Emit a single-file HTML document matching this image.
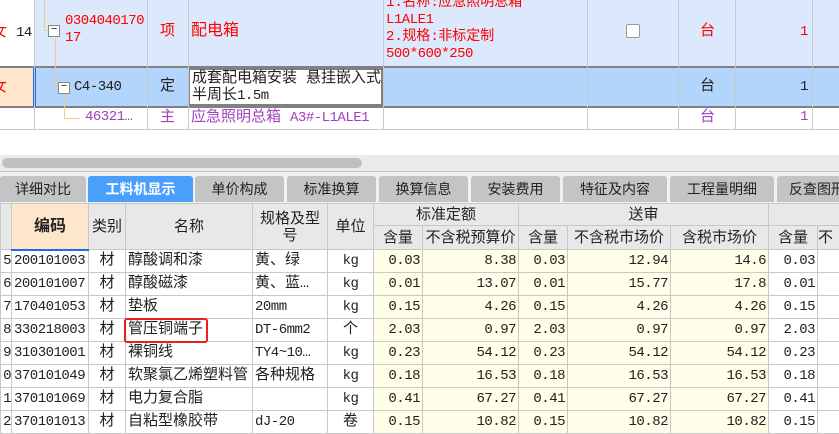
<!DOCTYPE html>
<html><head><meta charset="utf-8"><style>
*{margin:0;padding:0;box-sizing:border-box}
body{width:839px;height:432px;overflow:hidden;background:#fff;position:relative;font-family:"Liberation Mono","Noto Sans CJK SC",monospace;font-size:15px;color:#222}
.m{font-family:"Liberation Mono",monospace;font-size:14px;letter-spacing:-0.5px}
.a{position:absolute}
.v{position:absolute;width:1px;background:#c8c8c8}
.h{position:absolute;height:1px;background:#c8c8c8}
.t{position:absolute;white-space:nowrap;line-height:17px}
table{position:absolute;left:0;top:203px;border-collapse:collapse;table-layout:fixed;width:839px}
td{border:1px solid #c8c8c8;height:23px;white-space:nowrap;overflow:hidden;padding:0 2px;font-size:15px;line-height:20px}
td.n{font-family:"Liberation Mono",monospace;font-size:14px;letter-spacing:-0.5px}
th{border:1px solid #c8c8c8;background:#e8e8e8;font-weight:normal;font-family:"Liberation Sans","Noto Sans CJK SC",sans-serif;font-size:15px;line-height:17px;overflow:hidden;white-space:nowrap}
.c{text-align:center}.r{text-align:right}.y{background:#fffee8}
.tab{position:absolute;top:176px;height:26px;background:#c4c4c4;border-radius:3px 3px 0 0;text-align:center;line-height:26px;font-family:"Liberation Sans","Noto Sans CJK SC",sans-serif;font-size:14px;color:#222}
</style></head><body>
<div class="a" style="left:0;top:0;width:839px;height:68px;background:#dce9fc"></div>
<div class="a" style="left:0;top:0;width:34px;height:68px;background:#fff"></div>
<div class="a" style="left:0;top:66px;width:839px;height:42px;background:#b3d4fb;border-top:2px solid #808080;border-bottom:2px solid #808080"></div>
<div class="a" style="left:0;top:68px;width:34px;height:38px;background:#fde6cc"></div>
<div class="a" style="left:33px;top:68px;width:3px;height:38px;background:#1a6ee8"></div>
<div class="a" style="left:188px;top:68px;width:195px;height:38px;background:#fff;border:2px solid #808080"></div>
<div class="h" style="left:0;top:129px;width:839px"></div>
<div class="v" style="left:34px;top:0;height:129px"></div>
<div class="v" style="left:147px;top:0;height:129px"></div>
<div class="v" style="left:188px;top:0;height:129px"></div>
<div class="v" style="left:383px;top:0;height:129px"></div>
<div class="v" style="left:587px;top:0;height:129px"></div>
<div class="v" style="left:678px;top:0;height:129px"></div>
<div class="v" style="left:735px;top:0;height:129px"></div>
<div class="v" style="left:812px;top:0;height:129px"></div>
<div class="a" style="left:44px;top:0;width:1px;height:30px;background:#f8c88a"></div>
<div class="a" style="left:44px;top:30px;width:4px;height:1px;background:#f8c88a"></div>
<div class="a" style="left:55px;top:38px;width:1px;height:50px;background:#f8c88a"></div>
<div class="a" style="left:64px;top:93px;width:1px;height:25px;background:#f8c88a"></div>
<div class="a" style="left:64px;top:118px;width:16px;height:1px;background:#f8c88a"></div>
<div class="a" style="left:48px;top:25px;width:12px;height:12px;border:1px solid #888;background:#fff;font-size:11px;line-height:9px;text-align:center">−</div>
<div class="a" style="left:58px;top:82px;width:12px;height:12px;border:1px solid #888;background:#fff;font-size:11px;line-height:9px;text-align:center">−</div>
<div class="t" style="left:-8px;top:24px;color:#f00">女 <span class="m" style="color:#222">14</span></div>
<div class="t" style="left:-8px;top:79px;color:#f00">女</div>
<div class="t m" style="left:65px;top:13px;color:#f00">0304040170<br>17</div>
<div class="t" style="left:160px;top:23px;color:#f00">项</div>
<div class="t" style="left:191px;top:23px;color:#f00;font-size:16px">配电箱</div>
<div class="t" style="left:386px;top:-5px;color:#f00;font-size:14px">1<span class="m">.</span>名称<span class="m">:</span>应急照明总箱<br><span class="m">L1ALE1</span><br>2<span class="m">.</span>规格<span class="m">:</span>非标定制<br><span class="m">500*600*250</span></div>
<div class="a" style="left:626px;top:24px;width:14px;height:14px;border:1px solid #999;border-radius:2px;background:#fff"></div>
<div class="t" style="left:700px;top:23px;color:#f00">台</div>
<div class="t m" style="left:800px;top:24px;color:#f00">1</div>
<div class="t m" style="left:74px;top:79px">C4-340</div>
<div class="t" style="left:160px;top:78px">定</div>
<div class="t" style="left:192px;top:70px">成套配电箱安装 悬挂嵌入式<br>半周长<span class="m">1.5m</span></div>
<div class="t" style="left:700px;top:78px">台</div>
<div class="t m" style="left:800px;top:79px">1</div>
<div class="t m" style="left:85px;top:109px;color:#a040c0">46321…</div>
<div class="t" style="left:160px;top:109px;color:#a040c0">主</div>
<div class="t" style="left:191px;top:109px;color:#a040c0">应急照明总箱 <span class="m">A3#-L1ALE1</span></div>
<div class="t" style="left:700px;top:109px;color:#a040c0">台</div>
<div class="t m" style="left:800px;top:109px;color:#a040c0">1</div>
<div class="a" style="left:0;top:155px;width:839px;height:16px;background:#ebebeb"></div>
<div class="a" style="left:2px;top:158px;width:360px;height:10px;background:#c0c0c0;border-radius:5px"></div>
<div class="a" style="left:0;top:171px;width:839px;height:32px;background:#f0f0f0;border-top:1px solid #c8c8c8"></div>
<div class="tab" style="left:0;width:86px">详细对比</div>
<div class="tab" style="left:88px;width:105px;background:#4a9efc;color:#fff;font-weight:bold">工料机显示</div>
<div class="tab" style="left:195px;width:89px">单价构成</div>
<div class="tab" style="left:287px;width:89px">标准换算</div>
<div class="tab" style="left:379px;width:89px">换算信息</div>
<div class="tab" style="left:471px;width:89px">安装费用</div>
<div class="tab" style="left:563px;width:104px">特征及内容</div>
<div class="tab" style="left:670px;width:104px">工程量明细</div>
<div class="tab" style="left:777px;width:80px">反查图形</div>
<table>
<colgroup><col style="width:11px"><col style="width:77px"><col style="width:37px"><col style="width:127px"><col style="width:75px"><col style="width:46px"><col style="width:49px"><col style="width:96px"><col style="width:49px"><col style="width:103px"><col style="width:98px"><col style="width:49px"><col style="width:22px"></colgroup>
<tr style="height:22px"><th rowspan="2"></th><th rowspan="2" style="background:#fde6cc;font-weight:bold;font-size:16px;border-bottom:2px solid #1a6ee8">编码</th><th rowspan="2">类别</th><th rowspan="2">名称</th><th rowspan="2">规格及型<br>号</th><th rowspan="2">单位</th><th colspan="2">标准定额</th><th colspan="3">送审</th><th colspan="2"></th></tr>
<tr style="height:24px"><th>含量</th><th>不含税预算价</th><th>含量</th><th>不含税市场价</th><th>含税市场价</th><th>含量</th><th style="text-align:left">不</th></tr>
<tr><td class="r n" style="padding:0">5</td><td class="n">200101003</td><td class="c">材</td><td>醇酸调和漆</td><td>黄、绿</td><td class="c n">kg</td><td class="r y n">0.03</td><td class="r y n">8.38</td><td class="r y n">0.03</td><td class="r y n">12.94</td><td class="r y n">14.6</td><td class="r n">0.03</td><td></td></tr>
<tr><td class="r n" style="padding:0">6</td><td class="n">200101007</td><td class="c">材</td><td>醇酸磁漆</td><td>黄、蓝…</td><td class="c n">kg</td><td class="r y n">0.01</td><td class="r y n">13.07</td><td class="r y n">0.01</td><td class="r y n">15.77</td><td class="r y n">17.8</td><td class="r n">0.01</td><td></td></tr>
<tr><td class="r n" style="padding:0">7</td><td class="n">170401053</td><td class="c">材</td><td>垫板</td><td class="n">20mm</td><td class="c n">kg</td><td class="r y n">0.15</td><td class="r y n">4.26</td><td class="r y n">0.15</td><td class="r y n">4.26</td><td class="r y n">4.26</td><td class="r n">0.15</td><td></td></tr>
<tr><td class="r n" style="padding:0">8</td><td class="n">330218003</td><td class="c">材</td><td>管压铜端子</td><td class="n">DT-6mm2</td><td class="c">个</td><td class="r y n">2.03</td><td class="r y n">0.97</td><td class="r y n">2.03</td><td class="r y n">0.97</td><td class="r y n">0.97</td><td class="r n">2.03</td><td></td></tr>
<tr><td class="r n" style="padding:0">9</td><td class="n">310301001</td><td class="c">材</td><td>裸铜线</td><td class="n">TY4~10…</td><td class="c n">kg</td><td class="r y n">0.23</td><td class="r y n">54.12</td><td class="r y n">0.23</td><td class="r y n">54.12</td><td class="r y n">54.12</td><td class="r n">0.23</td><td></td></tr>
<tr><td class="r n" style="padding:0">0</td><td class="n">370101049</td><td class="c">材</td><td>软聚氯乙烯塑料管</td><td>各种规格</td><td class="c n">kg</td><td class="r y n">0.18</td><td class="r y n">16.53</td><td class="r y n">0.18</td><td class="r y n">16.53</td><td class="r y n">16.53</td><td class="r n">0.18</td><td></td></tr>
<tr><td class="r n" style="padding:0">1</td><td class="n">370101069</td><td class="c">材</td><td>电力复合脂</td><td></td><td class="c n">kg</td><td class="r y n">0.41</td><td class="r y n">67.27</td><td class="r y n">0.41</td><td class="r y n">67.27</td><td class="r y n">67.27</td><td class="r n">0.41</td><td></td></tr>
<tr><td class="r n" style="padding:0">2</td><td class="n">370101013</td><td class="c">材</td><td>自粘型橡胶带</td><td class="n">dJ-20</td><td class="c">卷</td><td class="r y n">0.15</td><td class="r y n">10.82</td><td class="r y n">0.15</td><td class="r y n">10.82</td><td class="r y n">10.82</td><td class="r n">0.15</td><td></td></tr>
</table>
<div class="a" style="left:124px;top:318px;width:84px;height:25px;border:2px solid #e82020;border-radius:3px"></div>
</body></html>
